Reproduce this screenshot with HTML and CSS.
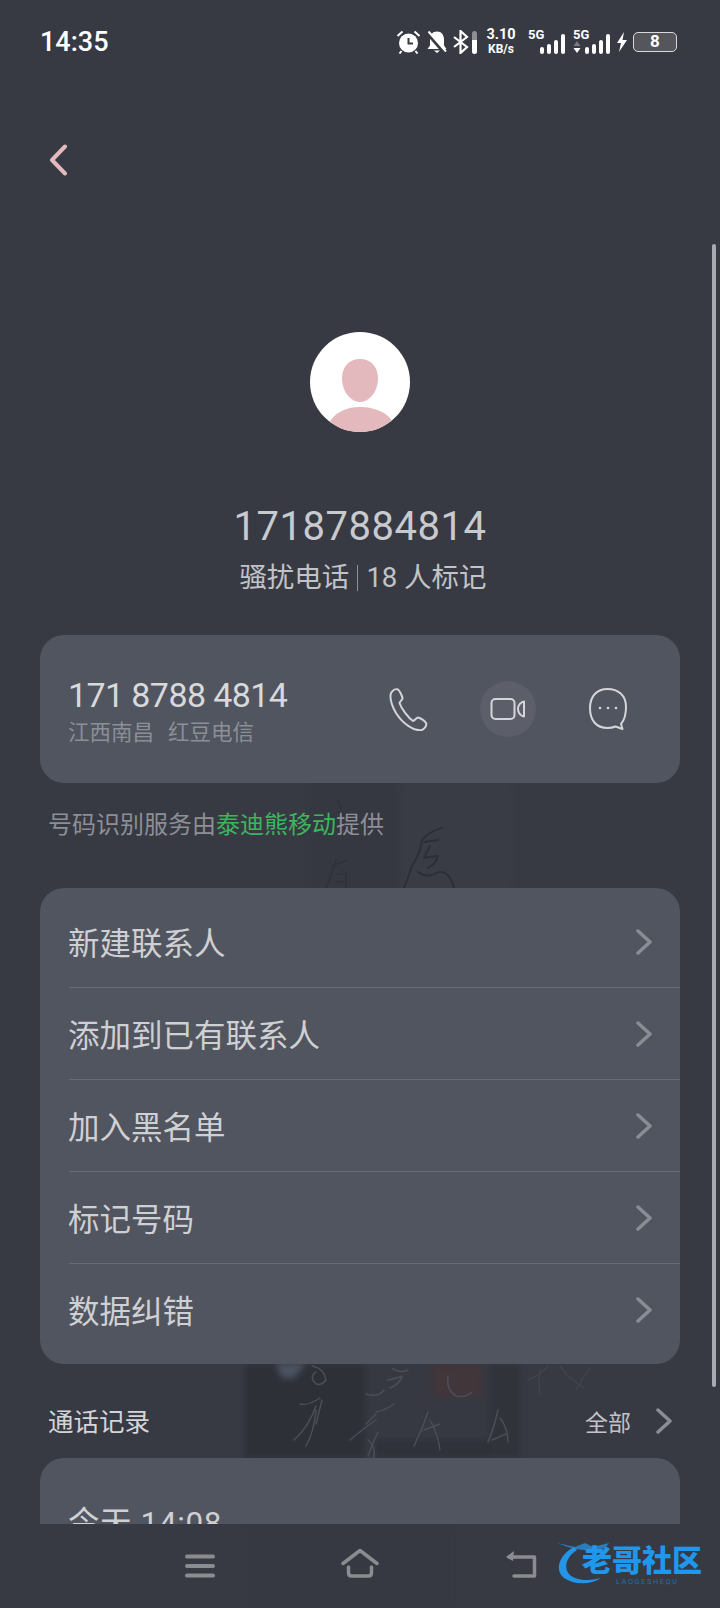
FILE: index.html
```html
<!DOCTYPE html>
<html lang="zh-CN">
<head>
  <meta charset="UTF-8">
  <meta name="viewport" content="width=device-width, initial-scale=1.0">
  <title>17187884814</title>
  <link rel="stylesheet" href="styles.css">
</head>
<body>
<div class="screen">
  <!-- faint ink wallpaper behind the cards -->
  <svg class="wallpaper" viewBox="0 0 720 1608" aria-hidden="true">
    <g class="wall-soft">
      <rect x="400" y="783" width="112" height="110" fill="#393c45"/>
      <rect x="310" y="783" width="90" height="110" fill="#353841"/>
      <rect x="245" y="1364" width="120" height="94" fill="#2e3037"/>
      <rect x="365" y="1364" width="125" height="76" fill="#363842"/>
      <rect x="375" y="1440" width="145" height="18" fill="#30323a"/>
      <rect x="432" y="1364" width="50" height="34" fill="#41363a"/>
      <rect x="490" y="1364" width="30" height="94" fill="#31333b"/>
      <path d="M276 1364h30l-12 14h-12z" fill="#4c5462"/>
      <rect x="250" y="1524" width="200" height="84" fill="#363942"/>
    </g>
    <g class="wall-ink" fill="none" stroke="#2c2e34" stroke-width="1.800" stroke-linecap="round" stroke-linejoin="round">
      <path d="M442 828q-14 4-20 12-2 14-10 26-4 12-8 22M424 842l14-2M430 846q-4 8-6 12 8-2 14-2-2 8-10 12M418 872q8 6 16 2 14-8 20 14"/>
    </g>
    <g class="wall-ink" fill="none" stroke="#30323a" stroke-width="1.600" stroke-linecap="round">
      <path d="M338 800l3 8M338 812l8 4M326 888q6-14 10-28M332 866l16-6M338 874h8v14M336 882h10"/>
    </g>
    <g class="wall-ink" fill="none" stroke="#4c4e56" stroke-width="1.500" stroke-linecap="round" stroke-linejoin="round">
      <path d="M312 1366q12 2 14 14-6 8-12 2-4-6 2-10M300 1404q8 2 20-6M294 1440q14-12 22-34M316 1410q-2 22-10 36M322 1400l-6 24"/>
      <path d="M366 1394q12 4 18-4M376 1412q10-2 18-8M366 1424l10-10M350 1440q14-12 26-20M368 1440q10 8 4 22M378 1432q-6 12-10 24"/>
      <path d="M392 1368q8 6 16 2M388 1380q10-2 14-4-2 8-12 12M448 1376q-2 14 8 20 10 2 16-4"/>
      <path d="M428 1412q-6 18-14 34M430 1420q8 14 10 30M424 1430l16-6M498 1410q-4 18-10 32M500 1418q8 10 8 24M492 1440l14-6"/>
    </g>
    <g class="wall-ink" fill="none" stroke="#41434b" stroke-width="1.500" stroke-linecap="round">
      <path d="M528 1380q14-6 20-14M540 1370q-2 12 0 24M560 1366q10 14 24 22M590 1368q-8 10-14 22"/>
    </g>
  </svg>

  <header class="status-bar">
    <span class="time">14:35</span>
    <div class="status-icons">
      <svg class="ic-alarm" viewBox="0 0 24 24" width="25" height="24">
        <circle cx="12" cy="13" r="9.500" fill="#fff"/>
        <path d="M12 8v5.500h4.500" fill="none" stroke="#373a43" stroke-width="2"/>
        <path d="M1 6l5-4.500M23 6l-5-4.500M5 21l-2 2.500M19 21l2 2.500" stroke="#fff" stroke-width="2" fill="none"/>
      </svg>
      <svg class="ic-bell" viewBox="0 0 22 24" width="22" height="24">
        <path d="M11 1.500c4.500 0 7 3.500 7 8v6l2.500 3.500h-19L4 15.500v-6c0-4.500 2.500-8 7-8z" fill="#fff"/>
        <path d="M8 20.500h6l-3 2.500z" fill="#fff"/>
        <path d="M1.500 3.500L19 23.500" stroke="#373a43" stroke-width="3.400"/>
        <path d="M2.500 1.500L20 21.500" stroke="#fff" stroke-width="2"/>
      </svg>
      <svg class="ic-bt" viewBox="0 0 16 24" width="16" height="24">
        <path d="M1 7l13 10-6.500 6V1L14 7 1 17" fill="none" stroke="#fff" stroke-width="2.200"/>
      </svg>
      <span class="bt-level"></span>
      <div class="speed"><b>3.10</b><b class="speed-unit">KB/s</b></div>
      <div class="signal">
        <span class="net">5G</span>
        <div class="bars"><i class="b1"></i><i class="b2"></i><i class="b3"></i><i class="b4"></i></div>
      </div>
      <div class="signal signal-two">
        <span class="net">5G</span>
        <svg class="arrows" viewBox="0 0 8 14" width="8" height="14">
          <path d="M4 1l3.500 5h-7z" fill="#777a80"/>
          <path d="M4 13l3.500-5h-7z" fill="#fff"/>
        </svg>
        <div class="bars"><i class="b1"></i><i class="b2"></i><i class="b3"></i><i class="b4"></i></div>
      </div>
      <svg class="ic-bolt" viewBox="0 0 10 20" width="10" height="20">
        <path d="M7 0L0 11h4l-2 9 8-12H5.500z" fill="#fff"/>
      </svg>
      <div class="battery">8</div>
    </div>
  </header>

  <main class="scroll">
    <div class="back-row">
      <svg viewBox="0 0 20 32" width="20" height="32">
        <path d="M17 2.500L4 16l13 13.500" fill="none" stroke="#e3b9bd" stroke-width="4" stroke-linecap="round" stroke-linejoin="round"/>
      </svg>
    </div>

    <div class="avatar">
      <svg viewBox="0 0 100 100" width="100" height="100">
        <path d="M50 27c11 0 18 8 18 19 0 14-9 24-18 24s-18-10-18-24c0-11 7-19 18-19z" fill="#e3b9bd"/>
        <path d="M19 92c4-11 17-17 31-17s29 6 33 16l-4 9H22z" fill="#e3b9bd"/>
      </svg>
    </div>
    <h1 class="name">17187884814</h1>
    <p class="tag">骚扰电话<span class="tag-sep"></span>18 人标记</p>

    <section class="card call-card">
      <div class="call-info">
        <div class="call-num">171 8788 4814</div>
        <div class="call-loc"><span>江西南昌</span><span>红豆电信</span></div>
      </div>
      <div class="actions">
        <div class="action">
          <svg viewBox="0 0 40 44" width="40" height="44">
            <path d="M3 6c2-3 5-4.500 7-3.500 1.500 1 4 6 4.500 8.500.3 1.500-2.500 3.500-3 5 2 6 9 15 13.500 18 1.500 0 3.500-3.500 5-3.500 2.500.5 7 3.500 8 5.500 1 2-1 5.500-4 7-8 1.500-19-6-26-17C4 19 1.500 11 3 6z" fill="none" stroke="#d4d5d8" stroke-width="2" stroke-linejoin="round"/>
          </svg>
        </div>
        <div class="action action-on">
          <svg viewBox="0 0 36 24" width="36" height="24">
            <rect x="1.500" y="2" width="23" height="20" rx="4" fill="none" stroke="#d4d5d8" stroke-width="2"/>
            <path d="M34 4.500v15c-3-.5-6-3.500-6-7.500s3-7 6-7.500z" fill="none" stroke="#d4d5d8" stroke-width="2" stroke-linejoin="round"/>
          </svg>
        </div>
        <div class="action">
          <svg viewBox="0 0 40 44" width="40" height="44">
            <path d="M19.500 2C30 2 38 8 38 20c0 7-1.500 13-5 17l1.500 5-7-2.500c-2.500 1-5 1.500-8 1.500C8 41 2 33 2 21 2 9 9 2 19.500 2z" fill="none" stroke="#d4d5d8" stroke-width="2" stroke-linejoin="round"/>
            <circle cx="12" cy="21" r="1.300" fill="#d4d5d8"/>
            <circle cx="20" cy="21" r="1.300" fill="#d4d5d8"/>
            <circle cx="28" cy="21" r="1.300" fill="#d4d5d8"/>
          </svg>
        </div>
      </div>
    </section>

    <p class="provider">号码识别服务由<span class="green">泰迪熊移动</span>提供</p>

    <section class="card menu">
      <div class="menu-row"><span>新建联系人</span><svg class="chev" viewBox="0 0 16 26" width="16" height="26"><path d="M2 2l12 11L2 24" /></svg></div>
      <div class="menu-row"><span>添加到已有联系人</span><svg class="chev" viewBox="0 0 16 26" width="16" height="26"><path d="M2 2l12 11L2 24" /></svg></div>
      <div class="menu-row"><span>加入黑名单</span><svg class="chev" viewBox="0 0 16 26" width="16" height="26"><path d="M2 2l12 11L2 24" /></svg></div>
      <div class="menu-row"><span>标记号码</span><svg class="chev" viewBox="0 0 16 26" width="16" height="26"><path d="M2 2l12 11L2 24" /></svg></div>
      <div class="menu-row"><span>数据纠错</span><svg class="chev" viewBox="0 0 16 26" width="16" height="26"><path d="M2 2l12 11L2 24" /></svg></div>
    </section>

    <div class="log-head">
      <span class="log-title">通话记录</span>
      <span class="log-all">全部<svg class="chev" viewBox="0 0 16 26" width="16" height="26"><path d="M2 2l12 11L2 24" /></svg></span>
    </div>
    <section class="card log-card">
      <div class="log-date">今天 14:08</div>
    </section>
  </main>

  <nav class="nav-bar">
    <svg viewBox="0 0 30 24" width="30" height="24">
      <path d="M2 2.500h26M2 12h26M2 21.500h26" stroke="#8b8c90" stroke-width="4" stroke-linecap="round"/>
    </svg>
    <svg viewBox="0 0 38 30" width="38" height="30">
      <path d="M2 15.500L19 2.500l17 13" fill="none" stroke="#8b8c90" stroke-width="3.500" stroke-linecap="round" stroke-linejoin="round"/>
      <path d="M7.500 19v5.500c0 2 1 3.500 3 3.500h17c2 0 3-1.500 3-3.500V19" fill="none" stroke="#8b8c90" stroke-width="3.500" stroke-linecap="round"/>
    </svg>
    <svg viewBox="0 0 32 28" width="32" height="28">
      <path d="M4 7h25.500v19H9" fill="none" stroke="#8b8c90" stroke-width="3.500" stroke-linecap="round" stroke-linejoin="round"/>
      <path d="M9 1L1 7l7 4z" fill="#8b8c90"/>
    </svg>
  </nav>

  <div class="watermark">
    <svg viewBox="0 0 148 46" width="148" height="46">
      <path d="M19 7C4 15-1 30 9 38c10 7 27 7 37 0-11 3-24 3-31-3C8 28 11 17 22 10z" fill="#2394e6"/>
      <path d="M2 3l18 4 10-4 8 4 16-4-4 5-14 3-15-2-8-2z" fill="#2a93e4" opacity=".75"/>
    </svg>
    <span class="wm-text">老哥社区</span>
    <span class="wm-sub">LAOGESHEQU</span>
  </div>

  <div class="scrollbar"></div>
</div>
</body>
</html>
```

FILE: styles.css
```css
* {
  margin: 0;
  padding: 0;
  box-sizing: border-box;
}

body {
  font-family: Roboto, "Noto Sans CJK SC", sans-serif;
  background: #373a43;
  color: #d4d5d8;
}

.screen {
  position: relative;
  width: 720px;
  height: 1608px;
  overflow: hidden;
  background: #373a43;
}

.wallpaper {
  position: absolute;
  left: 0;
  top: 0;
  width: 720px;
  height: 1608px;
}

.wall-soft {
  filter: blur(3px);
}

.wall-ink {
  filter: blur(0.6px);
}

.status-bar {
  position: relative;
  height: 82px;
  display: flex;
  justify-content: space-between;
  align-items: center;
  padding: 2px 43px 0 40px;
  color: #fff;
}

.time {
  font-size: 27px;
  font-weight: 500;
}

.status-icons {
  display: flex;
  align-items: center;
}

.ic-bell {
  margin-left: 5px;
}

.ic-bt {
  margin-left: 5px;
}

.bt-level {
  width: 5px;
  height: 23px;
  margin-left: 3px;
  border-radius: 3px;
  background: linear-gradient(to bottom, #8c8e93 40%, #fff 40%);
}

.speed {
  display: flex;
  flex-direction: column;
  align-items: center;
  width: 32px;
  margin-left: 8px;
  font-size: 14.500px;
  line-height: 14px;
}

.speed b {
  font-weight: 700;
}

.speed-unit {
  font-size: 12px;
}

.signal {
  position: relative;
  width: 37px;
  height: 24px;
  margin-left: 11px;
}

.signal-two {
  margin-left: 8px;
}

.net {
  position: absolute;
  left: 0;
  top: -2px;
  font-size: 13px;
  font-weight: 700;
  line-height: 14px;
}

.arrows {
  position: absolute;
  left: 0;
  bottom: 0;
}

.bars {
  position: absolute;
  right: 0;
  bottom: 0;
  display: flex;
  align-items: flex-end;
  gap: 3px;
}

.bars i {
  display: block;
  width: 4px;
  border-radius: 2px;
  background: #fff;
}

.b1 { height: 7px; }
.b2 { height: 10px; }
.b3 { height: 14px; }
.b4 { height: 20px; }

.ic-bolt {
  margin-left: 7px;
}

.battery {
  width: 44px;
  height: 20px;
  margin-left: 6px;
  border: 1.500px solid #d8d9db;
  border-radius: 5px;
  background: #54565c;
  font-size: 17px;
  font-weight: 700;
  line-height: 17px;
  text-align: center;
}

.scroll {
  position: relative;
  height: 1442px;
  overflow: hidden;
  padding: 0 40px;
}

.back-row {
  height: 150px;
  padding: 62px 0 0 8px;
}

.avatar {
  width: 100px;
  height: 100px;
  margin: 100px auto 0;
  border-radius: 50%;
  overflow: hidden;
  background: #fff;
}

.name {
  margin-top: 71px;
  font-size: 40px;
  font-weight: 400;
  line-height: 48px;
  letter-spacing: 0.5px;
  text-align: center;
  color: #c9cacd;
}

.tag {
  margin-top: 9px;
  padding-left: 6px;
  display: flex;
  justify-content: center;
  align-items: center;
  font-size: 27.500px;
  line-height: 36px;
  color: #c2c3c7;
}

.tag-sep {
  width: 1px;
  height: 26px;
  margin: 0 8px;
  background: #8e9096;
}

.card {
  border-radius: 24px;
  background: #51555f;
}

.call-card {
  display: flex;
  justify-content: space-between;
  align-items: center;
  height: 148px;
  margin-top: 39px;
  padding: 0 44px 0 28px;
}

.call-info {
  padding-top: 4px;
}

.call-num {
  font-size: 34px;
  line-height: 40px;
  letter-spacing: -0.6px;
  color: #d8d9db;
}

.call-loc {
  display: flex;
  gap: 14px;
  margin-top: 3px;
  font-size: 21.500px;
  line-height: 30px;
  color: #8c8f96;
}

.actions {
  display: flex;
  gap: 44px;
}

.action {
  display: flex;
  justify-content: center;
  align-items: center;
  width: 56px;
  height: 56px;
  border-radius: 50%;
}

.action-on {
  background: #5c5f69;
}

.provider {
  margin: 24px 0 0 8px;
  font-size: 24px;
  line-height: 36px;
  color: #8c8f96;
}

.green {
  color: #3cb55d;
}

.menu {
  height: 476px;
  margin-top: 45px;
  padding: 8px 0 9px 29px;
}

.menu-row {
  display: flex;
  justify-content: space-between;
  align-items: center;
  height: 92px;
  padding: 0 28px 0 0;
  border-bottom: 1px solid #686b74;
  font-size: 31.500px;
  color: #cfd0d3;
}

.menu-row span {
  margin: -2px 0 0 -1px;
}

.menu-row:last-child {
  border-bottom: 0;
}

.chev {
  fill: none;
  stroke: #8b8d94;
  stroke-width: 3.500;
  stroke-linecap: round;
  stroke-linejoin: round;
}

.log-head {
  display: flex;
  justify-content: space-between;
  align-items: center;
  height: 36px;
  margin-top: 37px;
  padding: 0 8px 0 8px;
}

.log-title {
  font-size: 25.500px;
  color: #d4d5d8;
}

.log-all {
  display: flex;
  align-items: center;
  gap: 25px;
  margin-top: 4px;
  font-size: 23px;
  color: #c2c3c7;
}

.log-all .chev {
  margin-top: 0;
}

.log-card {
  height: 200px;
  margin-top: 21px;
  padding: 46px 28px 0;
}

.log-date {
  font-size: 31.500px;
  line-height: 40px;
  letter-spacing: 0.6px;
  color: #cfd0d3;
}

.nav-bar {
  position: relative;
  height: 84px;
  display: flex;
  align-items: flex-end;
  padding: 0 0 30px 185px;
  gap: 126px;
}

.watermark {
  position: absolute;
  left: 555px;
  top: 1540px;
  width: 150px;
  height: 46px;
}

.wm-text {
  position: absolute;
  left: 27px;
  top: 7px;
  width: 122px;
  font-size: 30px;
  font-weight: 900;
  line-height: 28px;
  white-space: nowrap;
  color: #1f97ec;
}

.wm-sub {
  position: absolute;
  left: 61px;
  top: 37px;
  font-size: 7.500px;
  line-height: 9px;
  letter-spacing: 1.500px;
  color: #1c6fb0;
}

.scrollbar {
  position: absolute;
  left: 712px;
  top: 244px;
  width: 4px;
  height: 1143px;
  border-radius: 2px;
  background: #a9aaae;
}
```
